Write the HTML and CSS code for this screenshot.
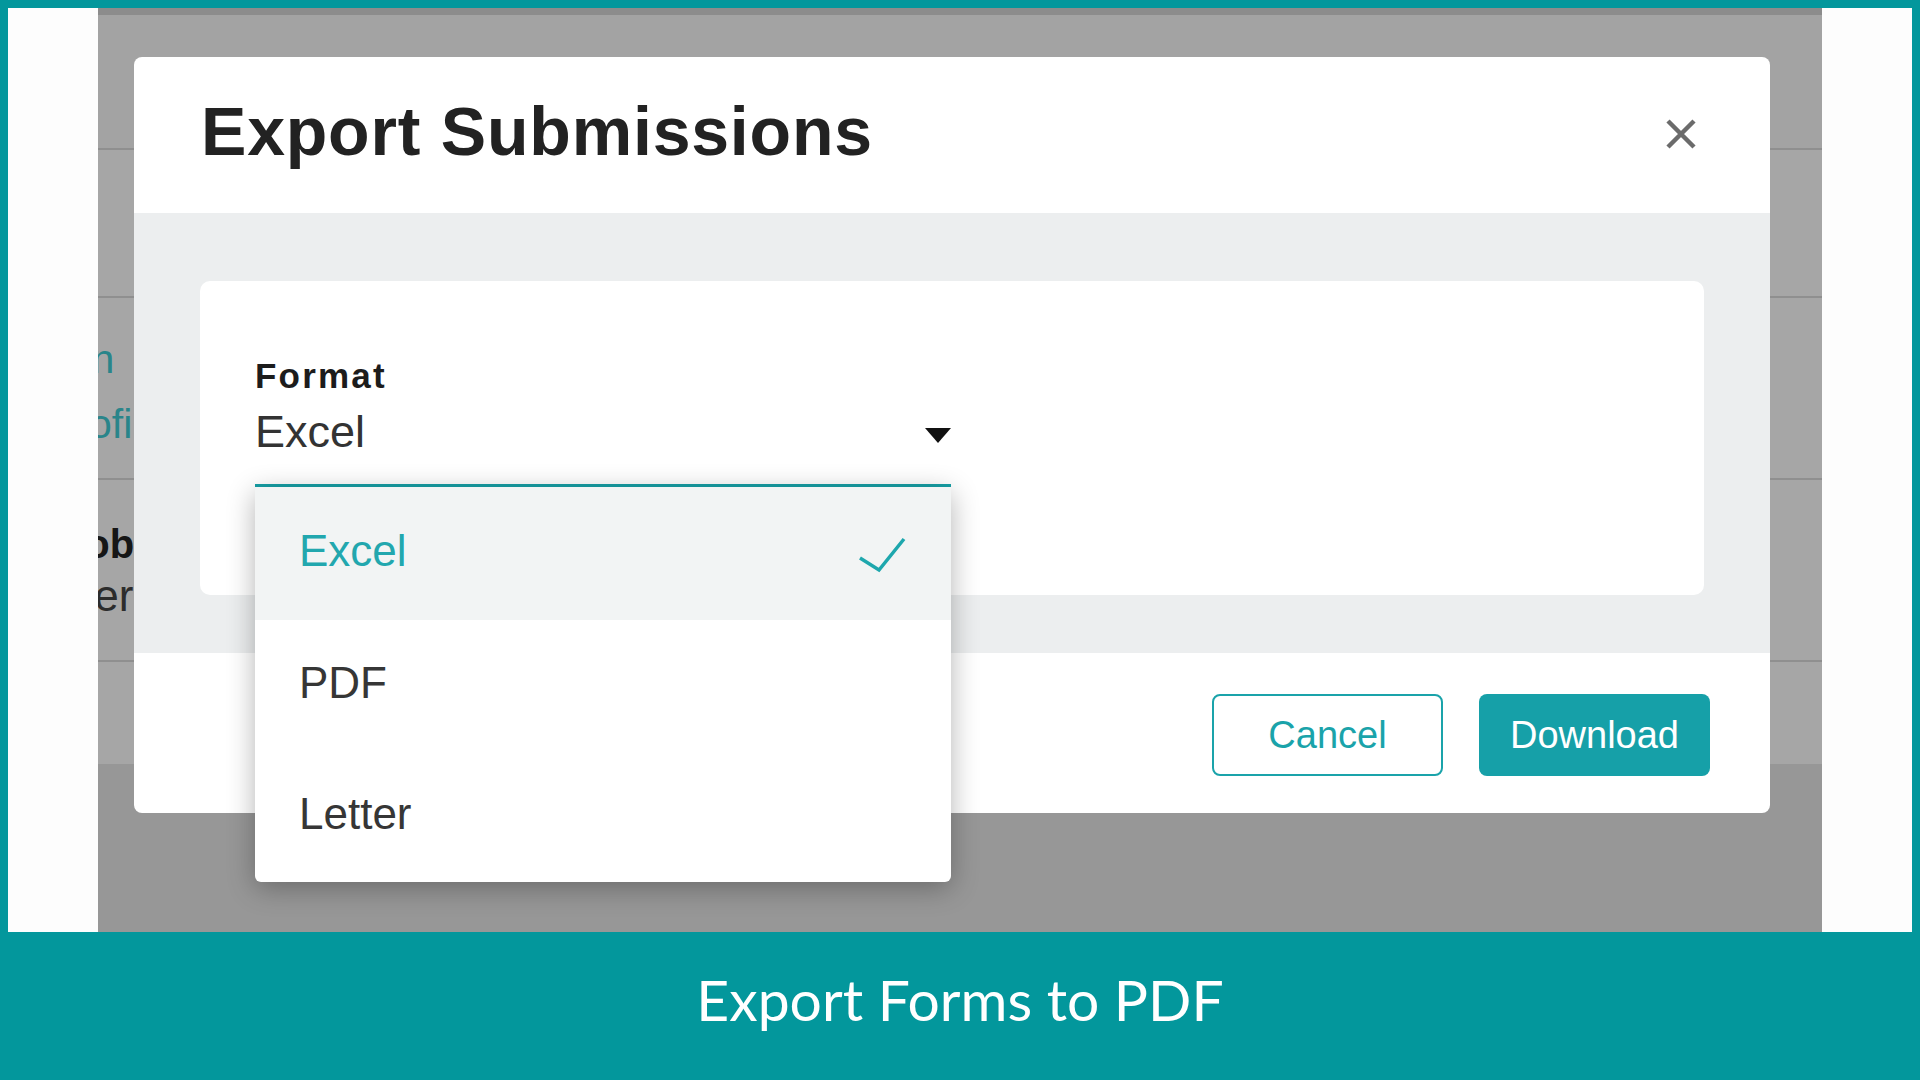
FILE: index.html
```html
<!DOCTYPE html>
<html lang="en">
<head>
<meta charset="utf-8">
<title>Export Submissions</title>
<link rel="stylesheet" href="styles.css">
</head>
<body>
<div class="stage">
  <div class="side"></div>
  <div class="app">
    <div class="page">
      <div class="topbar"></div>
      <div class="row r1"></div>
      <div class="row r2"></div>
      <div class="row r3">
        <div class="ln link l-admin">Admin</div>
        <div class="ln link l-profile">Profile</div>
      </div>
      <div class="row r4">
        <div class="ln strong l-job">Job</div>
        <div class="ln sub l-member">Member</div>
      </div>
      <div class="row r5"></div>
      <div class="rest"></div>
    </div>
    <div class="overlay">
      <div class="modal">
        <div class="modal-header">
          <h1 class="modal-title">Export Submissions</h1>
          <button class="close" aria-label="Close">
            <svg width="32" height="32" viewBox="0 0 32 32"><path d="M3 3 L29 29 M29 3 L3 29" stroke="#6b6b6b" stroke-width="4.5" fill="none"/></svg>
          </button>
        </div>
        <div class="modal-body">
          <div class="card">
            <div class="field">
              <div class="field-label">Format</div>
              <div class="field-value">
                <span>Excel</span>
                <svg class="caret" width="26" height="15" viewBox="0 0 26 15"><path d="M0 0 H26 L13 15 Z" fill="#111"/></svg>
              </div>
              <ul class="menu">
                <li class="menu-item selected"><span>Excel</span>
                  <svg class="check" width="48" height="36" viewBox="0 0 48 36"><path d="M2 21 L21 33 L46 2" stroke="#1ea7ad" stroke-width="3.5" fill="none"/></svg>
                </li>
                <li class="menu-item"><span>PDF</span></li>
                <li class="menu-item"><span>Letter</span></li>
              </ul>
            </div>
          </div>
        </div>
        <div class="modal-footer">
          <button class="btn btn-outline">Cancel</button>
          <button class="btn btn-primary">Download</button>
        </div>
      </div>
    </div>
  </div>
  <div class="side"></div>
</div>
<div class="caption">Export Forms to PDF</div>
</body>
</html>
```
FILE: styles.css
```css
* { box-sizing: border-box; }
html, body { margin: 0; padding: 0; }
body {
  width: 1920px;
  height: 1080px;
  background: #03979c;
  font-family: "Liberation Sans", Arial, sans-serif;
  overflow: hidden;
}
.stage {
  height: 932px;
  padding: 8px 8px 0 8px;
  display: grid;
  grid-template-columns: 90px 1724px 90px;
}
.side { background: #fdfdfd; }
.app {
  position: relative;
  overflow: hidden;
  background: #fff;
}
.page { display: flex; flex-direction: column; height: 100%; }
.topbar { height: 7px; background: #d8d8d8; }
.row { border-bottom: 2px solid #dcdcdc; background: #fff; }
.r1 { height: 135px; background: #fafafa; }
.r2 { height: 148px; }
.r3 { height: 182px; padding-top: 29px; }
.r4 { height: 182px; padding-top: 40px; }
.r5 { height: 102px; border-bottom: none; }
.rest { flex: 1; background: #e9e9e9; }
.ln { white-space: nowrap; }
.link { color: #3fccd4; font-size: 41px; line-height: 65px; }
.l-admin { margin-left: -100px; }
.l-profile { margin-left: -50px; }
.strong { font-weight: bold; color: #222; font-size: 40px; line-height: 48px; margin-left: -35px; }
.sub { color: #444; font-size: 44px; line-height: 56px; margin-left: -126px; }

.overlay {
  position: absolute;
  inset: 0;
  background: rgba(0, 0, 0, 0.35);
  padding: 49px 0 0 36px;
}
.modal {
  width: 1636px;
  height: 756px;
  background: #fff;
  border-radius: 8px;
  display: flex;
  flex-direction: column;
}
.modal-header {
  height: 156px;
  display: flex;
  align-items: center;
  justify-content: space-between;
  padding: 0 73px 9px 67px;
}
.modal-title {
  margin: 0;
  font-size: 68px;
  line-height: 68px;
  font-weight: bold;
  color: #222;
  letter-spacing: 0.8px;
}
.close {
  border: 0;
  background: none;
  padding: 0;
  margin-top: 6px;
  width: 32px;
  height: 32px;
  display: flex;
}
.modal-body {
  height: 440px;
  background: #eceeef;
  padding: 68px 66px 58px 66px;
}
.card {
  background: #fff;
  border-radius: 10px;
  height: 314px;
  padding: 75px 0 0 55px;
}
.field { position: relative; width: 696px; }
.field-label {
  font-size: 35px;
  line-height: 40px;
  font-weight: bold;
  color: #1c1c1c;
  letter-spacing: 2.2px;
}
.field-value {
  margin-top: 8px;
  display: flex;
  align-items: center;
  justify-content: space-between;
  font-size: 45px;
  line-height: 56px;
  color: #333;
  padding-bottom: 24px;
  border-bottom: 3px solid #17a0a6;
}
.caret { margin-top: 6px; }
.menu {
  position: absolute;
  top: 100%;
  left: 0;
  width: 100%;
  margin: 0;
  padding: 0;
  list-style: none;
  background: #fff;
  border-radius: 0 0 6px 6px;
  box-shadow: 0 6px 28px rgba(0, 0, 0, 0.3);
  z-index: 5;
}
.menu-item {
  height: 131px;
  display: flex;
  align-items: center;
  justify-content: space-between;
  padding: 0 45px 6px 44px;
  font-size: 44px;
  color: #363636;
}
.menu-item.selected {
  height: 133px;
  background: #f2f4f4;
  color: #22a7ae;
}
.check { margin-top: 8px; }
.modal-footer {
  flex: 1;
  display: flex;
  align-items: center;
  justify-content: flex-end;
  gap: 36px;
  padding: 4px 60px 0 0;
  border-radius: 0 0 8px 8px;
}
.btn {
  width: 231px;
  height: 82px;
  border-radius: 8px;
  font-family: "Liberation Sans", Arial, sans-serif;
  font-size: 38px;
  cursor: pointer;
}
.btn-outline {
  background: #fff;
  color: #1aa3aa;
  border: 2.5px solid #1aa3aa;
}
.btn-primary {
  background: #16a0a8;
  color: #fff;
  border: 0;
}
.caption {
  height: 148px;
  padding-top: 33px;
  text-align: center;
  color: #fff;
  font-family: Lato, "Open Sans", sans-serif;
  font-size: 57px;
  line-height: 1.2;
}
```
